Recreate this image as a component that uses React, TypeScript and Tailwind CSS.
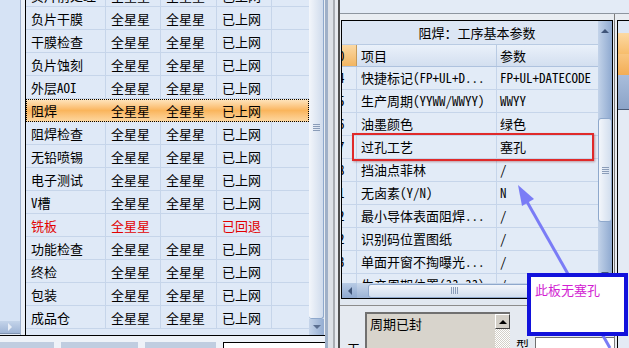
import React from "react";

type StepRow = { name: string; a: string; b: string; c: string; sel?: boolean; red?: boolean };

const steps: StepRow[] = [
  { name: "负片前处理", a: "全星星", b: "全星星", c: "已上网" },
  { name: "负片干膜", a: "全星星", b: "全星星", c: "已上网" },
  { name: "干膜检查", a: "全星星", b: "全星星", c: "已上网" },
  { name: "负片蚀刻", a: "全星星", b: "全星星", c: "已上网" },
  { name: "外层AOI", a: "全星星", b: "全星星", c: "已上网" },
  { name: "阻焊", a: "全星星", b: "全星星", c: "已上网", sel: true },
  { name: "阻焊检查", a: "全星星", b: "全星星", c: "已上网" },
  { name: "无铅喷锡", a: "全星星", b: "全星星", c: "已上网" },
  { name: "电子测试", a: "全星星", b: "全星星", c: "已上网" },
  { name: "V槽", a: "全星星", b: "全星星", c: "已上网" },
  { name: "铣板", a: "全星星", b: "", c: "已回退", red: true },
  { name: "功能检查", a: "全星星", b: "全星星", c: "已上网" },
  { name: "终检", a: "全星星", b: "全星星", c: "已上网" },
  { name: "包装", a: "全星星", b: "全星星", c: "已上网" },
  { name: "成品仓", a: "全星星", b: "全星星", c: "已上网" },
];

const params = [
  ["4", "快捷标记(FP+UL+D...", "FP+UL+DATECODE"],
  ["5", "生产周期(YYWW/WWYY)", "WWYY"],
  ["6", "油墨颜色", "绿色"],
  ["7", "过孔工艺", "塞孔"],
  ["8", "挡油点菲林", "/"],
  ["1", "无卤素(Y/N)", "N"],
  ["2", "最小导体表面阻焊...", "/"],
  ["2", "识别码位置图纸", "/"],
  ["3", "单面开窗不掏曝光...", "/"],
  ["-", "生产周期位置(??-??)", "/"],
];

const Grip = ({ vertical }: { vertical?: boolean }) =>
  vertical ? (
    <div className="flex flex-col gap-[1px]">
      <div className="h-px w-[7px] bg-[#8a9cb8]" />
      <div className="h-px w-[7px] bg-[#8a9cb8]" />
      <div className="h-px w-[7px] bg-[#8a9cb8]" />
      <div className="h-px w-[7px] bg-[#8a9cb8]" />
    </div>
  ) : (
    <div className="flex gap-[1px]">
      <div className="h-[7px] w-px bg-[#8a9cb8]" />
      <div className="h-[7px] w-px bg-[#8a9cb8]" />
      <div className="h-[7px] w-px bg-[#8a9cb8]" />
      <div className="h-[7px] w-px bg-[#8a9cb8]" />
    </div>
  );

const StepLine = ({ row }: { row: StepRow }) => {
  const cell = row.sel ? "" : "border-r border-[#c6d5ea]";
  return (
    <div
      className={`flex h-[23px] shrink-0 items-center text-[13px] leading-none ${
        row.sel
          ? "bg-gradient-to-b from-[#fee7c2] via-[#fab55c] to-[#fdd9a3] outline-1 outline-dotted outline-black -outline-offset-1"
          : "border-b border-[#c6d5ea]"
      } ${row.red ? "text-[#e20000]" : "text-black"}`}
    >
      <div className={`flex h-full w-[80px] items-center pl-[5px] ${cell}`}>{row.name}</div>
      <div className={`flex h-full w-[55px] items-center pl-[5px] ${cell}`}>{row.a}</div>
      <div className={`flex h-full w-[56px] items-center pl-[5px] ${cell}`}>{row.b}</div>
      <div className={`flex h-full w-[55px] items-center pl-[5px] ${cell}`}>{row.c}</div>
      <div className="h-full w-[37px]" />
    </div>
  );
};

const LeftSide = () => (
  <div className="flex h-full w-[325px] flex-col">
    <div className="flex h-[337px]">
      <div className="flex w-[21px] flex-col border-r border-[#9fb2cf] bg-[#d6e3f5]">
        <div className="h-[321px]" />
        <div className="flex h-[12px] items-center justify-center bg-gradient-to-b from-[#c4d4ea] to-[#9fb5d6]">
          <div className="h-0 w-0 border-y-[4px] border-l-[4px] border-y-transparent border-l-[#e9eff8]" />
        </div>
        <div className="flex-1 border-t border-[#7f93b0] bg-[#e4ebf5]" />
      </div>
      <div className="w-[5px] border-r border-black bg-[#eaf0f8]" />
      <div className="flex w-[283px] flex-col overflow-hidden bg-[#dfe9f7]">
        <div className="-mt-[16px] flex flex-col">
          {steps.map((r, i) => (
            <StepLine key={i} row={r} />
          ))}
        </div>
      </div>
      <div className="flex w-[15px] flex-col bg-[#dbe5f2]">
        <div className="flex h-[319px] flex-col items-center rounded-b-[3px] border-r border-b border-[#8ea8cc] bg-gradient-to-r from-[#f3f6fb] to-[#cfdbec]">
          <div className="h-[124px]" />
          <Grip vertical />
        </div>
        <div className="flex h-[16px] items-center justify-center bg-gradient-to-r from-[#c6d5ea] to-[#93acd1]">
          <div className="h-0 w-0 border-x-[4px] border-t-[4px] border-x-transparent border-t-[#5b6f90]" />
        </div>
      </div>
    </div>
    <div className="flex flex-1 gap-[7px] border-t border-black bg-[#eef2f8] pt-[6px]">
      <div className="h-[6px] w-[55px] bg-[#c0cde0]" />
      <div className="h-[6px] w-[78px] bg-[#c0cde0]" />
      <div className="h-[6px] w-[72px] bg-[#c0cde0]" />
      <div className="h-[6px] w-[104px] border-l border-t border-black bg-white" />
    </div>
  </div>
);

const ParamGrid = () => (
  <div className="ml-[1px] flex h-[279px] w-[272px] border border-black bg-[#e2ebf7]">
    <div className="flex w-[256px] flex-col">
      <div className="flex h-[24px] shrink-0 items-center justify-center border-b border-[#b9cbe3] bg-[#dce6f4] pl-[14px] text-[13px]">
        阻焊：工序基本参数
      </div>
      <div className="flex h-[22px] shrink-0 border-b border-[#aec2de] text-[13px]">
        <div className="flex w-[15px] items-center overflow-hidden border-r border-[#c49a5a] bg-gradient-to-b from-[#fbd9a4] to-[#f2b560]">
          <span className="-ml-[4px]">0</span>
        </div>
        <div className="flex w-[140px] items-center border-r border-[#b9cbe3] bg-gradient-to-b from-[#eaf1fa] to-[#d3dff0] pl-[4px]">
          项目
        </div>
        <div className="flex w-[101px] items-center bg-gradient-to-b from-[#eaf1fa] to-[#d3dff0] pl-[3px]">
          参数
        </div>
      </div>
      <div className="flex h-[216px] flex-col overflow-hidden">
        {params.map((p, i) => (
          <div key={i} className="flex h-[23px] shrink-0 border-b border-[#c6d5ea] text-[13px]">
            <div className="flex w-[15px] items-center overflow-hidden border-r border-[#c6d5ea]">
              <span className="-ml-[4px]">{p[0]}</span>
            </div>
            <div className="flex w-[140px] items-center overflow-hidden whitespace-nowrap border-r border-[#c6d5ea] pl-[4px]">
              {p[1]}
            </div>
            <div className="flex w-[101px] items-center overflow-hidden whitespace-nowrap pl-[3px]">{p[2]}</div>
          </div>
        ))}
      </div>
      <div className="flex h-[15px] items-center bg-gradient-to-b from-[#c9d7ea] to-[#9bb3d6]">
        <div className="flex h-full w-[15px] items-center justify-center bg-gradient-to-b from-[#b8cbe5] to-[#8ea8cf]">
          <div className="h-0 w-0 border-y-[4px] border-r-[4px] border-y-transparent border-r-[#3f5478]" />
        </div>
        <div className="ml-[11px] flex h-[14px] w-[177px] items-center justify-center rounded-[3px] border border-[#8ea8cc] bg-gradient-to-b from-[#f3f6fb] to-[#d2deee]">
          <div className="-ml-[4px]">
            <Grip />
          </div>
        </div>
      </div>
    </div>
    <div className="flex w-[14px] flex-col bg-gradient-to-r from-[#c3d3e9] to-[#8ea9d0]">
      <div className="flex h-[19px] items-center justify-center">
        <div className="h-0 w-0 border-x-[4px] border-b-[4px] border-x-transparent border-b-[#3f5478]" />
      </div>
      <div className="h-[78px]" />
      <div className="flex h-[104px] items-center justify-center rounded-[3px] border border-[#8ea8cc] bg-gradient-to-r from-[#f3f6fb] to-[#d2deee]">
        <Grip vertical />
      </div>
      <div className="flex-1" />
      <div className="flex h-[19px] items-center justify-center">
        <div className="h-0 w-0 border-x-[4px] border-t-[4px] border-x-transparent border-t-[#3f5478]" />
      </div>
      <div className="h-[15px] bg-[#e2ebf7]" />
    </div>
  </div>
);

const MiddleSide = () => (
  <div className="flex h-full w-[274px] flex-col bg-[#e9edf2]">
    <div className="h-[14px] border-b border-[#8d959f] bg-[#e3ebf6]" />
    <div className="h-[6px]" />
    <ParamGrid />
    <div className="h-[7px] border-b border-[#8c8c8c] bg-[#e1e8f1]" />
    <div className="flex flex-1 bg-[#e5eaf1]">
      <div className="flex w-[25px] items-end justify-center pl-[2px] text-[13px] leading-none">
        <span className="-mb-[6px]">工</span>
      </div>
      <div className="mt-[6px] flex w-[145px] border-l-2 border-t-2 border-[#707070] bg-[#d8d4cc]">
        <div className="flex-1 pl-[3px] pt-[3px] text-[13px] leading-none">周期已封</div>
        <div className="flex w-[15px] flex-col">
          <div className="flex h-[15px] items-center justify-center border-b border-l border-r border-t border-b-[#404040] border-l-white border-r-[#404040] border-t-white bg-[#d4d0c8]">
            <div className="h-0 w-0 border-x-[4px] border-b-[4px] border-x-transparent border-b-black" />
          </div>
          <div className="flex-1 bg-[repeating-conic-gradient(#ffffff_0_25%,#d4d0c8_0_50%)] bg-[length:2px_2px]" />
        </div>
      </div>
      <div className="flex w-[25px] items-end justify-center text-[13px] leading-none">
        <span className="-mb-[3px]">型</span>
      </div>
      <div className="mt-[31px] flex-1 border-l border-t border-[#707070] bg-white" />
    </div>
  </div>
);

const RightSide = () => (
  <div className="flex h-full w-[15px] flex-col bg-[#e9edf2]">
    <div className="h-[14px] border-b border-[#8d959f] bg-[#e3ebf6]" />
    <div className="flex flex-1 border-l border-[#7c7c7c] pl-[2px] pt-[6px]">
      <div className="flex flex-1 flex-col border-l border-t border-black">
        <div className="h-[12px] bg-[#dce6f4]" />
        <div className="h-[21px] bg-gradient-to-b from-[#fcd9a2] to-[#f7bd6c]" />
        <div className="h-[21px] bg-gradient-to-b from-[#f9c680] to-[#f2ad55]" />
        <div className="h-[35px] border-b border-[#4a5a74] bg-gradient-to-b from-[#a9bddb] to-[#8ca4c8]" />
        <div className="flex-1 bg-[#e4ebf5]" />
      </div>
    </div>
  </div>
);

export default function App() {
  return (
    <div className="relative flex h-[348px] w-[629px] overflow-hidden bg-[#e9edf2] font-['Noto_Sans_Mono_CJK_SC','Liberation_Mono','Noto_Sans_CJK_SC',monospace] text-black">
      <LeftSide />
      <div className="flex h-full w-[15px]">
        <div className="w-[3px] bg-[#9fb0c8]" />
        <div className="w-[5px] bg-[#dde1e7]" />
        <div className="w-[2px] bg-[#a9adb3]" />
        <div className="w-[3px] bg-[#e6e9ee]" />
        <div className="w-[2px] bg-[#4f4f4f]" />
      </div>
      <MiddleSide />
      <RightSide />

      <div className="absolute left-[352px] top-[133px] h-[28px] w-[242px] border-2 border-[#e02a2a] shadow-[1px_1px_2px_rgba(120,0,0,0.35)]" />

      <svg className="pointer-events-none absolute left-0 top-0" width="629" height="348" viewBox="0 0 629 348">
        <line x1="526" y1="200" x2="610" y2="348" stroke="#7a7cf6" strokeWidth="3" />
        <polygon points="518,185 522,206 534,199" fill="#7a7cf6" />
      </svg>

      <div className="absolute left-[527px] top-[273px] h-[63px] w-[101px] border-[4px] border-[#1212dc] bg-white pl-[4px] pt-[6px] text-[13px] leading-none text-[#d21ed2]">
        此板无塞孔
      </div>
    </div>
  );
}
